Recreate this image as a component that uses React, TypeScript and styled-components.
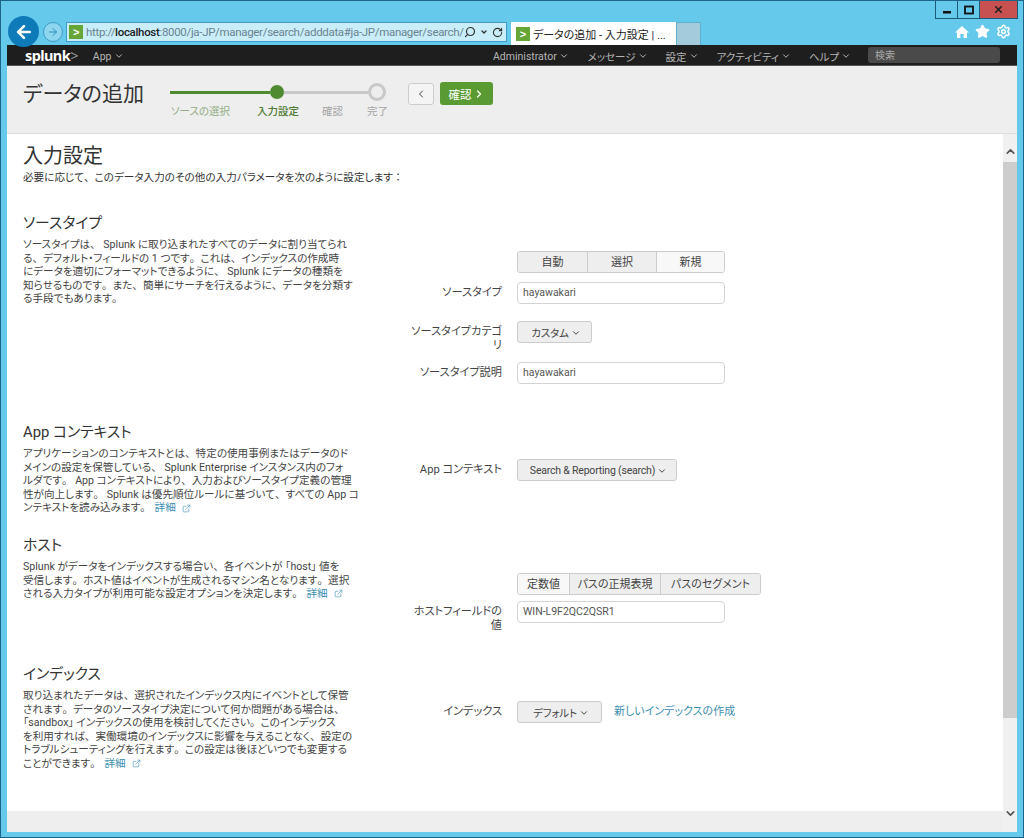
import React from 'react'
import styled, { createGlobalStyle } from 'styled-components'
import { ArrowLeft, ArrowRight, ChevronDown, ChevronLeft, ChevronRight, ChevronUp, RotateCw, Search, Settings, Star, X, ExternalLink } from 'lucide-react'

const GlobalStyle = createGlobalStyle`
  html, body {
    margin: 0;
    padding: 0;
    height: 838px;
    overflow: hidden;
  }
  body {
    font-family: Roboto, "Noto Sans CJK JP", sans-serif;
    font-size: 11.5px;
    font-feature-settings: "palt";
    color: #444;
  }
  * { box-sizing: border-box; }
`

const Window = styled.div`
  position: relative;
  width: 1024px;
  height: 838px;
  display: flex;
  flex-direction: column;
  background: #65c9ec;
  border: 1px solid #1d6488;
  padding: 0 6px 5px 6px;
`

const Caption = styled.div`
  position: absolute;
  top: 0;
  right: 5px;
  display: flex;
  height: 18px;
  border: 1px solid #1d5a78;
  border-top: 0;
`

const CaptionBtn = styled.div<{ $close?: boolean }>`
  width: ${p => (p.$close ? '37px' : '22px')};
  background: ${p => (p.$close ? '#c75050' : 'transparent')};
  border-right: ${p => (p.$close ? '0' : '1px solid #1d5a78')};
  display: flex;
  align-items: center;
  justify-content: center;
`

const Chrome = styled.div`
  height: 44px;
  display: flex;
  align-items: flex-end;
`

const BackCircle = styled.div`
  width: 31px;
  height: 31px;
  border-radius: 50%;
  background: #0f7ab8;
  display: flex;
  align-items: center;
  justify-content: center;
  color: #fff;
  margin-left: 1px;
  margin-bottom: -2px;
  position: relative;
  z-index: 1;
  flex: none;
`

const ForwardCircle = styled.div`
  width: 20px;
  height: 20px;
  border-radius: 50%;
  background: #8ed6ef;
  border: 1px solid #3f9cc4;
  color: #2b8dbb;
  display: flex;
  align-items: center;
  justify-content: center;
  margin: 0 3px 3px 4px;
  flex: none;
`

const AddressBar = styled.div`
  width: 441px;
  height: 20px;
  margin-bottom: 3px;
  background: #c9eefa;
  border: 1px solid #3f9cc4;
  display: flex;
  align-items: center;
  padding: 0 6px 0 2px;
  font-family: Roboto, sans-serif;
  font-size: 11.5px;
  letter-spacing: -0.32px;
  color: #6b8290;
  flex: none;
`

const UrlText = styled.span`
  flex: 1;
  white-space: nowrap;
  margin-left: 3px;
  b { color: #222; font-weight: 500; }
`

const Favicon = styled.span`
  width: 14px;
  height: 14px;
  background: #65a637;
  color: #fff;
  font: bold 11px/14px "Liberation Sans", sans-serif;
  text-align: center;
  flex: none;
`

const AddrTools = styled.span`
  display: flex;
  align-items: center;
  gap: 4px;
  color: #333;
`

const TabCell = styled.div`
  width: 165px;
  height: 23px;
  margin-left: 4px;
  background: #fff;
  display: flex;
  align-items: center;
  padding: 0 6px 0 5px;
  gap: 3px;
  font-size: 11px;
  color: #222;
  white-space: nowrap;
  flex: none;
`

const TabTitle = styled.span`
  flex: 1;
`

const NewTab = styled.div`
  width: 25px;
  height: 23px;
  background: #a3cbdc;
  border: 1px solid #5fb0cf;
  border-bottom: 0;
  flex: none;
`

const BrowserTools = styled.div`
  margin-left: auto;
  margin-bottom: 6px;
  margin-right: 6px;
  display: flex;
  gap: 6px;
  color: #fff;
  align-items: center;
`

const TopNav = styled.nav`
  height: 21px;
  background: #1e1e1e;
  border-bottom: 1px solid #555;
  display: flex;
  align-items: center;
  padding: 0 17px 0 18px;
  color: #b5b5b5;
  font-size: 10.5px;
  flex: none;
`

const Logo = styled.span`
  font: bold 14.5px/1 "Noto Sans", sans-serif;
  color: #fff;
  letter-spacing: -0.04em;
  margin-right: 15px;
  i { font-style: normal; font-weight: 400; color: #999; }
`

const NavItem = styled.span<{ $gap?: number }>`
  display: inline-flex;
  align-items: center;
  gap: 2px;
  margin: 2px ${p => p.$gap ?? 16}px 0 0;
  white-space: nowrap;
`

const NavSpacer = styled.span`
  flex: 1;
`

const SearchBox = styled.div`
  width: 132px;
  height: 16px;
  border-radius: 3px;
  background: #4a4a4a;
  color: #aaa;
  font-size: 10px;
  line-height: 18px;
  padding-left: 7px;
`

const PageHead = styled.header`
  height: 68px;
  background: #eee;
  border-bottom: 1px solid #ddd;
  display: flex;
  padding-left: 16px;
  flex: none;
`

const PageTitle = styled.h1`
  margin: 14px 0 0;
  width: 147px;
  font-size: 21px;
  line-height: 28px;
  font-weight: 400;
  color: #333;
  white-space: nowrap;
`

const Steps = styled.div`
  width: 218px;
  margin-top: 16px;
  display: flex;
  flex-direction: column;
`

const StepTrack = styled.div`
  height: 20px;
  display: flex;
  align-items: center;
`

const StepLine = styled.span<{ $done?: boolean; $w: number }>`
  width: ${p => p.$w}px;
  height: 3px;
  background: ${p => (p.$done ? '#4e8a2f' : '#c8c8c8')};
`

const StepDot = styled.span`
  width: 14px;
  height: 14px;
  border-radius: 50%;
  background: #4e8a2f;
  flex: none;
`

const StepRing = styled.span`
  width: 18px;
  height: 18px;
  border-radius: 50%;
  border: 3px solid #c8c8c8;
  background: #eee;
  flex: none;
`

const StepLabels = styled.div`
  display: flex;
  margin-top: 1px;
  padding-left: 1px;
  font-size: 10.5px;
  white-space: nowrap;
`

const StepLabel = styled.span<{ $color: string; $w: number; $strong?: boolean }>`
  width: ${p => p.$w}px;
  color: ${p => p.$color};
  font-weight: ${p => (p.$strong ? 500 : 400)};
`

const HeadButtons = styled.div`
  display: flex;
  gap: 6px;
  margin: 16px 0 0 20px;
  align-items: flex-start;
`

const BackBtn = styled.div`
  width: 26px;
  height: 22px;
  margin-top: 1px;
  border: 1px solid #ccc;
  border-radius: 3px;
  background: #f4f4f4;
  color: #444;
  display: flex;
  align-items: center;
  justify-content: center;
`

const NextBtn = styled.div`
  width: 53px;
  height: 23px;
  border-radius: 3px;
  background: #5a9a32;
  color: #fff;
  font-size: 11.5px;
  display: flex;
  align-items: center;
  justify-content: center;
  gap: 1px;
`

const Body = styled.div`
  flex: 1;
  min-height: 0;
  display: flex;
  background: #fff;
`

const Main = styled.main`
  flex: 1;
  min-width: 0;
  display: flex;
  flex-direction: column;
  overflow: hidden;
`

const Content = styled.div`
  height: 677px;
  padding: 10px 0 0 16px;
  flex: none;
`

const StepTitle = styled.h2`
  margin: 0;
  font-size: 20px;
  line-height: 24px;
  font-weight: 400;
  color: #333;
`

const Lead = styled.p`
  margin: 3px 0 0;
  font-size: 10.6px;
  line-height: 14px;
  color: #333;
  white-space: nowrap;
`

const Section = styled.section<{ $top: number; $h: number }>`
  margin-top: ${p => p.$top}px;
  height: ${p => p.$h}px;
  display: grid;
  grid-template-columns: 387px 1fr;
`

const SectionTitle = styled.h3`
  margin: 0 0 5px;
  font-size: 14.8px;
  line-height: 20px;
  font-weight: 400;
  color: #333;
`

const SectionText = styled.p`
  margin: 0;
  font-size: 10.6px;
  line-height: 13.6px;
  color: #444;
  white-space: nowrap;
`

// punctuation stays full width while the kana around it are set proportional
const Punct = styled.span`
  font-feature-settings: normal;
`

const Form = styled.div<{ $top: number }>`
  padding-top: ${p => p.$top}px;
  display: flex;
  flex-direction: column;
`

const FormRow = styled.div<{ $mb?: number }>`
  display: grid;
  grid-template-columns: 92px 1fr;
  column-gap: 15px;
  margin-bottom: ${p => p.$mb ?? 0}px;
`

const FieldLabel = styled.label`
  text-align: right;
  font-size: 11.2px;
  line-height: 14px;
  padding-top: 4px;
  color: #444;
`

const Controls = styled.div`
  display: flex;
  align-items: flex-start;
  gap: 12px;
`

const Segmented = styled.div`
  display: inline-flex;
  justify-self: start;
  height: 22px;
  border: 1px solid #ccc;
  border-radius: 3px;
  overflow: hidden;
`

const Segment = styled.span<{ $active?: boolean; $w: number }>`
  width: ${p => p.$w}px;
  text-align: center;
  font-size: 11px;
  line-height: 21px;
  color: #444;
  white-space: nowrap;
  background: ${p => (p.$active ? '#f8f8f8' : '#eee')};
  & + & { border-left: 1px solid #ccc; }
`

const TextInput = styled.div`
  width: 208px;
  height: 22px;
  border: 1px solid #d4d4d4;
  border-radius: 4px;
  background: #fff;
  padding-left: 5px;
  font-size: 10.5px;
  line-height: 20px;
  color: #555;
`

const Dropdown = styled.div<{ $w: number }>`
  width: ${p => p.$w}px;
  height: 22px;
  padding: 1px 0 0 3px;
  border: 1px solid #ccc;
  border-radius: 3px;
  background: #eee;
  display: flex;
  align-items: center;
  justify-content: center;
  gap: 2px;
  font-size: 10.5px;
  letter-spacing: -0.2px;
  color: #444;
  white-space: nowrap;
  flex: none;
`

const TextLink = styled.a`
  font-size: 11px;
  line-height: 22px;
  color: #3d8fb0;
  white-space: nowrap;
`

const More = styled.a`
  color: #3d8fb0;
  margin-left: 1px;
  display: inline-flex;
  align-items: center;
  gap: 6px;
  vertical-align: top;
`

const Footer = styled.div`
  flex: 1;
  background: #eee;
`

const Scrollbar = styled.div`
  width: 14px;
  background: #f0f0f0;
  display: flex;
  flex-direction: column;
  align-items: center;
  padding: 11px 0 12px;
  color: #555;
  flex: none;
`

const ScrollThumb = styled.div`
  width: 100%;
  height: 556px;
  margin-top: 4px;
  background: #cdcdcd;
`

const ScrollTrack = styled.div`
  flex: 1;
`

const DetailLink = () => (
  <More>
    詳細
    <ExternalLink size={9} strokeWidth={1.6} />
  </More>
)

const Jp = ({ text }: { text: string }) => (
  <>
    {text.split(/([、。：])/).map((part, i) =>
      i % 2 ? <Punct key={i}>{part}</Punct> : part
    )}
  </>
)

const Lines = ({ lines, children }: { lines: string[]; children?: React.ReactNode }) => (
  <SectionText>
    {lines.map((line, i) => (
      <React.Fragment key={i}>
        <Jp text={line} />
        {i < lines.length - 1 ? <br /> : null}
      </React.Fragment>
    ))}
    {children}
  </SectionText>
)

const Caret = () => <ChevronDown size={10} strokeWidth={2.4} />

export default function App() {
  return (
    <>
      <GlobalStyle />
      <Window>
        <Caption>
          <CaptionBtn>
            <svg width="10" height="10" viewBox="0 0 10 10"><rect x="1" y="6" width="8" height="2.5" fill="#111" /></svg>
          </CaptionBtn>
          <CaptionBtn>
            <svg width="10" height="10" viewBox="0 0 10 10"><rect x="1" y="1.5" width="8" height="7" fill="none" stroke="#111" strokeWidth="1.8" /></svg>
          </CaptionBtn>
          <CaptionBtn $close>
            <X size={11} strokeWidth={3.5} color="#222" />
          </CaptionBtn>
        </Caption>

        <Chrome>
          <BackCircle>
            <ArrowLeft size={20} strokeWidth={3} />
          </BackCircle>
          <ForwardCircle>
            <ArrowRight size={12} strokeWidth={2} />
          </ForwardCircle>
          <AddressBar>
            <Favicon>&gt;</Favicon>
            <UrlText>
              http://<b>localhost</b>:8000/ja-JP/manager/search/adddata#ja-JP/manager/search/
            </UrlText>
            <AddrTools>
              <Search size={12} strokeWidth={2.4} style={{ transform: 'scaleX(-1)' }} />
              <ChevronDown size={8} strokeWidth={4} />
              <RotateCw size={11} strokeWidth={2.4} />
            </AddrTools>
          </AddressBar>
          <TabCell>
            <Favicon>&gt;</Favicon>
            <TabTitle>データの追加 - 入力設定 | ...</TabTitle>
            <X size={10} color="#888" strokeWidth={2} />
          </TabCell>
          <NewTab />
          <BrowserTools>
            <svg width="14" height="14" viewBox="0 0 14 14">
              <path d="M7 1 L14 7.5 H12 V13 H8.6 V9 H5.4 V13 H2 V7.5 H0 Z" fill="#fff" />
            </svg>
            <Star size={15} fill="#fff" />
            <Settings size={15} strokeWidth={2.4} />
          </BrowserTools>
        </Chrome>

        <TopNav>
          <Logo>splunk<i>&gt;</i></Logo>
          <NavItem>App<Caret /></NavItem>
          <NavSpacer />
          <NavItem $gap={19}>Administrator<Caret /></NavItem>
          <NavItem $gap={18}>メッセージ<Caret /></NavItem>
          <NavItem $gap={18}>設定<Caret /></NavItem>
          <NavItem $gap={18}>アクティビティ<Caret /></NavItem>
          <NavItem $gap={17}>ヘルプ<Caret /></NavItem>
          <SearchBox>検索</SearchBox>
        </TopNav>

        <PageHead>
          <PageTitle>データの追加</PageTitle>
          <Steps>
            <StepTrack>
              <StepLine $done $w={100} />
              <StepDot />
              <StepLine $w={84} />
              <StepRing />
            </StepTrack>
            <StepLabels>
              <StepLabel $w={86} $color="#93ad84">ソースの選択</StepLabel>
              <StepLabel $w={65} $color="#4e7a33" $strong>入力設定</StepLabel>
              <StepLabel $w={45} $color="#a5a5a5">確認</StepLabel>
              <StepLabel $w={20} $color="#a5a5a5">完了</StepLabel>
            </StepLabels>
          </Steps>
          <HeadButtons>
            <BackBtn><ChevronLeft size={12} strokeWidth={2} /></BackBtn>
            <NextBtn>確認<ChevronRight size={12} strokeWidth={2.5} /></NextBtn>
          </HeadButtons>
        </PageHead>

        <Body>
          <Main>
            <Content>
              <StepTitle>入力設定</StepTitle>
              <Lead><Jp text="必要に応じて、このデータ入力のその他の入力パラメータを次のように設定します：" /></Lead>

              <Section $top={28} $h={209}>
                <div>
                  <SectionTitle>ソースタイプ</SectionTitle>
                  <Lines
                    lines={[
                      'ソースタイプは、 Splunk に取り込まれたすべてのデータに割り当てられ',
                      'る、デフォルト・フィールドの 1 つです。これは、インデックスの作成時',
                      'にデータを適切にフォーマットできるように、 Splunk にデータの種類を',
                      '知らせるものです。また、簡単にサーチを行えるように、データを分類す',
                      'る手段でもあります。',
                    ]}
                  />
                </div>
                <Form $top={38}>
                  <FormRow $mb={9}>
                    <span />
                    <Segmented>
                      <Segment $w={69}>自動</Segment>
                      <Segment $w={69}>選択</Segment>
                      <Segment $w={68} $active>新規</Segment>
                    </Segmented>
                  </FormRow>
                  <FormRow $mb={17}>
                    <FieldLabel>ソースタイプ</FieldLabel>
                    <TextInput>hayawakari</TextInput>
                  </FormRow>
                  <FormRow $mb={9}>
                    <FieldLabel>ソースタイプカテゴリ</FieldLabel>
                    <Controls><Dropdown $w={75}>カスタム<Caret /></Dropdown></Controls>
                  </FormRow>
                  <FormRow>
                    <FieldLabel>ソースタイプ説明</FieldLabel>
                    <TextInput>hayawakari</TextInput>
                  </FormRow>
                </Form>
              </Section>

              <Section $top={0} $h={113}>
                <div>
                  <SectionTitle>App コンテキスト</SectionTitle>
                  <Lines
                    lines={[
                      'アプリケーションのコンテキストとは、特定の使用事例またはデータのド',
                      'メインの設定を保管している、 Splunk Enterprise インスタンス内のフォ',
                      'ルダです。 App コンテキストにより、入力およびソースタイプ定義の管理',
                      '性が向上します。 Splunk は優先順位ルールに基づいて、すべての App コ',
                      'ンテキストを読み込みます。 ',
                    ]}
                  >
                    <DetailLink />
                  </Lines>
                </div>
                <Form $top={37}>
                  <FormRow>
                    <FieldLabel>App コンテキスト</FieldLabel>
                    <Controls><Dropdown $w={160}>Search &amp; Reporting (search)<Caret /></Dropdown></Controls>
                  </FormRow>
                </Form>
              </Section>

              <Section $top={0} $h={129}>
                <div>
                  <SectionTitle>ホスト</SectionTitle>
                  <Lines
                    lines={[
                      'Splunk がデータをインデックスする場合い、各イベントが 「host」 値を',
                      '受信します。ホスト値はイベントが生成されるマシン名となります。選択',
                      'される入力タイプが利用可能な設定オプションを決定します。 ',
                    ]}
                  >
                    <DetailLink />
                  </Lines>
                </div>
                <Form $top={38}>
                  <FormRow $mb={6}>
                    <span />
                    <Segmented>
                      <Segment $w={51} $active>定数値</Segment>
                      <Segment $w={91}>パスの正規表現</Segment>
                      <Segment $w={100}>パスのセグメント</Segment>
                    </Segmented>
                  </FormRow>
                  <FormRow>
                    <FieldLabel>ホストフィールドの値</FieldLabel>
                    <TextInput>WIN-L9F2QC2QSR1</TextInput>
                  </FormRow>
                </Form>
              </Section>

              <Section $top={0} $h={130}>
                <div>
                  <SectionTitle>インデックス</SectionTitle>
                  <Lines
                    lines={[
                      '取り込まれたデータは、選択されたインデックス内にイベントとして保管',
                      'されます。データのソースタイプ決定について何か問題がある場合は、',
                      '「sandbox」 インデックスの使用を検討してください。このインデックス',
                      'を利用すれば、実働環境のインデックスに影響を与えることなく、設定の',
                      'トラブルシューティングを行えます。この設定は後ほどいつでも変更する',
                      'ことができます。 ',
                    ]}
                  >
                    <DetailLink />
                  </Lines>
                </div>
                <Form $top={37}>
                  <FormRow>
                    <FieldLabel>インデックス</FieldLabel>
                    <Controls>
                      <Dropdown $w={85}>デフォルト<Caret /></Dropdown>
                      <TextLink>新しいインデックスの作成</TextLink>
                    </Controls>
                  </FormRow>
                </Form>
              </Section>
            </Content>
            <Footer />
          </Main>
          <Scrollbar>
            <ChevronUp size={13} strokeWidth={3} />
            <ScrollThumb />
            <ScrollTrack />
            <ChevronDown size={13} strokeWidth={3} />
          </Scrollbar>
        </Body>
      </Window>
    </>
  )
}
